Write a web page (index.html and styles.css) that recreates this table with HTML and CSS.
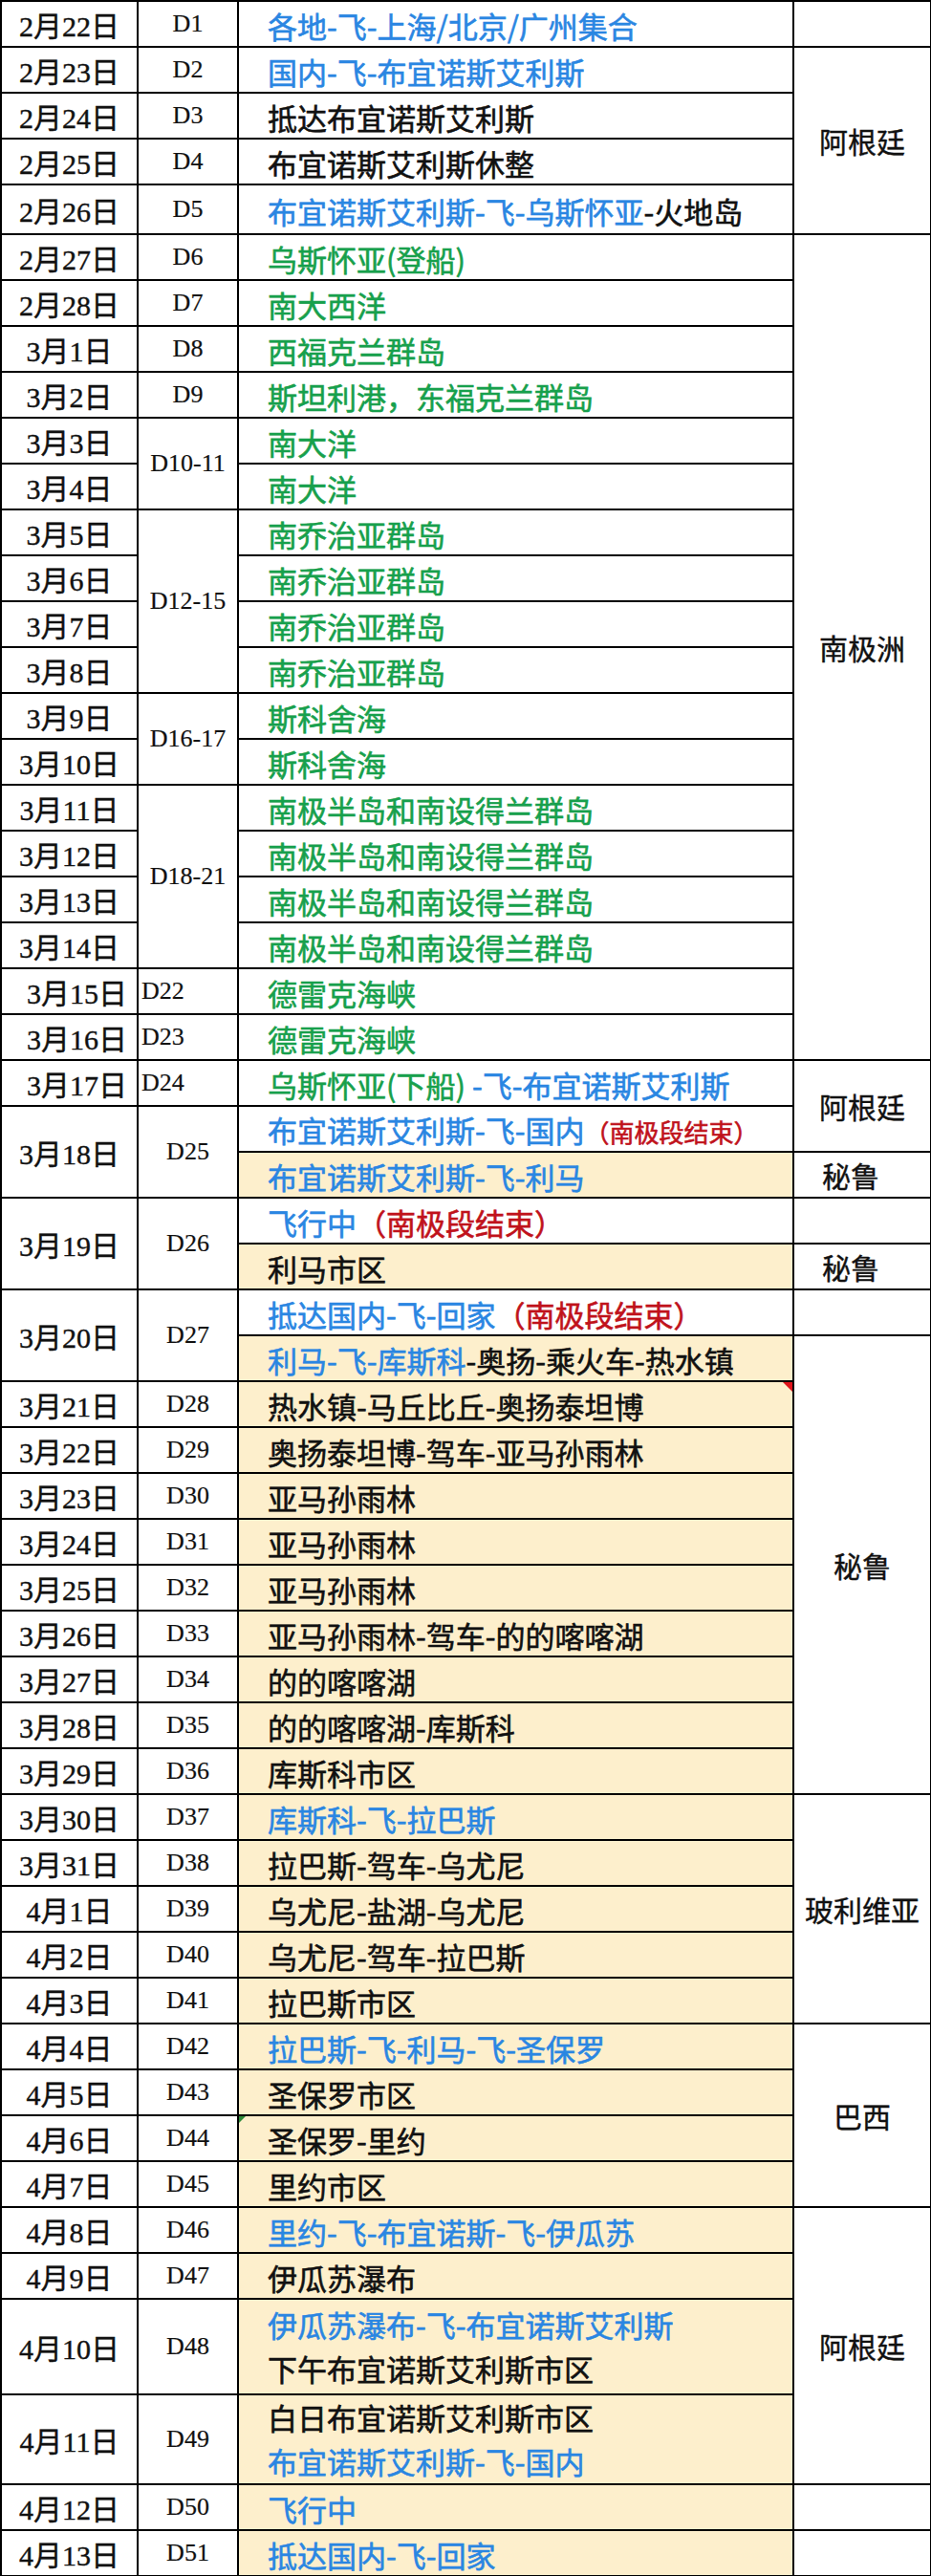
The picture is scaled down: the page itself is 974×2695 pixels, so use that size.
FILE: index.html
```html
<!DOCTYPE html>
<html lang="zh-CN">
<head>
<meta charset="utf-8">
<title>行程表</title>
<link rel="stylesheet" href="styles.css">
</head>
<body>
<table class="sched">
<colgroup>
<col class="c-date"><col class="c-day"><col class="c-act"><col class="c-country">
</colgroup>
<tbody>
<tr><td class="date">2月22日</td><td class="day">D1</td><td class="act"><span class="b">各地-飞-上海/北京/广州集合</span></td><td class="country"></td></tr>
<tr><td class="date">2月23日</td><td class="day">D2</td><td class="act"><span class="b">国内-飞-布宜诺斯艾利斯</span></td><td class="country" rowspan="4">阿根廷</td></tr>
<tr><td class="date">2月24日</td><td class="day">D3</td><td class="act">抵达布宜诺斯艾利斯</td></tr>
<tr><td class="date">2月25日</td><td class="day">D4</td><td class="act">布宜诺斯艾利斯休整</td></tr>
<tr class="tall52"><td class="date">2月26日</td><td class="day">D5</td><td class="act"><span class="b">布宜诺斯艾利斯-飞-乌斯怀亚</span>-火地岛</td></tr>
<tr><td class="date">2月27日</td><td class="day">D6</td><td class="act"><span class="g">乌斯怀亚(登船)</span></td><td class="country" rowspan="18">南极洲</td></tr>
<tr><td class="date">2月28日</td><td class="day">D7</td><td class="act"><span class="g">南大西洋</span></td></tr>
<tr><td class="date">3月1日</td><td class="day">D8</td><td class="act"><span class="g">西福克兰群岛</span></td></tr>
<tr><td class="date">3月2日</td><td class="day">D9</td><td class="act"><span class="g">斯坦利港，东福克兰群岛</span></td></tr>
<tr><td class="date">3月3日</td><td class="day" rowspan="2">D10-11</td><td class="act"><span class="g">南大洋</span></td></tr>
<tr><td class="date">3月4日</td><td class="act"><span class="g">南大洋</span></td></tr>
<tr><td class="date">3月5日</td><td class="day" rowspan="4">D12-15</td><td class="act"><span class="g">南乔治亚群岛</span></td></tr>
<tr><td class="date">3月6日</td><td class="act"><span class="g">南乔治亚群岛</span></td></tr>
<tr><td class="date">3月7日</td><td class="act"><span class="g">南乔治亚群岛</span></td></tr>
<tr><td class="date">3月8日</td><td class="act"><span class="g">南乔治亚群岛</span></td></tr>
<tr><td class="date">3月9日</td><td class="day" rowspan="2">D16-17</td><td class="act"><span class="g">斯科舍海</span></td></tr>
<tr><td class="date">3月10日</td><td class="act"><span class="g">斯科舍海</span></td></tr>
<tr><td class="date">3月11日</td><td class="day" rowspan="4">D18-21</td><td class="act"><span class="g">南极半岛和南设得兰群岛</span></td></tr>
<tr><td class="date">3月12日</td><td class="act"><span class="g">南极半岛和南设得兰群岛</span></td></tr>
<tr><td class="date">3月13日</td><td class="act"><span class="g">南极半岛和南设得兰群岛</span></td></tr>
<tr><td class="date">3月14日</td><td class="act"><span class="g">南极半岛和南设得兰群岛</span></td></tr>
<tr><td class="date shift">3月15日</td><td class="day left">D22</td><td class="act"><span class="g">德雷克海峡</span></td></tr>
<tr><td class="date shift">3月16日</td><td class="day left">D23</td><td class="act"><span class="g">德雷克海峡</span></td></tr>
<tr><td class="date shift">3月17日</td><td class="day left">D24</td><td class="act"><span class="g">乌斯怀亚(下船)</span><span class="b"> -飞-布宜诺斯艾利斯</span></td><td class="country" rowspan="2">阿根廷</td></tr>
<tr><td class="date" rowspan="2">3月18日</td><td class="day" rowspan="2">D25</td><td class="act"><span class="b">布宜诺斯艾利斯-飞-国内</span><span class="r small">（南极段结束）</span></td></tr>
<tr><td class="act tan"><span class="b">布宜诺斯艾利斯-飞-利马</span></td><td class="country peru">秘鲁</td></tr>
<tr><td class="date" rowspan="2">3月19日</td><td class="day" rowspan="2">D26</td><td class="act"><span class="b">飞行中</span><span class="r">（南极段结束）</span></td><td class="country"></td></tr>
<tr><td class="act tan">利马市区</td><td class="country peru">秘鲁</td></tr>
<tr><td class="date" rowspan="2">3月20日</td><td class="day" rowspan="2">D27</td><td class="act"><span class="b">抵达国内-飞-回家</span><span class="r">（南极段结束）</span></td><td class="country"></td></tr>
<tr><td class="act tan"><span class="b">利马-飞-库斯科</span>-奥扬-乘火车-热水镇</td><td class="country" rowspan="10">秘鲁</td></tr>
<tr><td class="date">3月21日</td><td class="day">D28</td><td class="act tan note">热水镇-马丘比丘-奥扬泰坦博</td></tr>
<tr><td class="date">3月22日</td><td class="day">D29</td><td class="act tan">奥扬泰坦博-驾车-亚马孙雨林</td></tr>
<tr><td class="date">3月23日</td><td class="day">D30</td><td class="act tan">亚马孙雨林</td></tr>
<tr><td class="date">3月24日</td><td class="day">D31</td><td class="act tan">亚马孙雨林</td></tr>
<tr><td class="date">3月25日</td><td class="day">D32</td><td class="act tan">亚马孙雨林</td></tr>
<tr><td class="date">3月26日</td><td class="day">D33</td><td class="act tan">亚马孙雨林-驾车-的的喀喀湖</td></tr>
<tr><td class="date">3月27日</td><td class="day">D34</td><td class="act tan">的的喀喀湖</td></tr>
<tr><td class="date">3月28日</td><td class="day">D35</td><td class="act tan">的的喀喀湖-库斯科</td></tr>
<tr><td class="date">3月29日</td><td class="day">D36</td><td class="act tan">库斯科市区</td></tr>
<tr><td class="date">3月30日</td><td class="day">D37</td><td class="act tan"><span class="b">库斯科-飞-拉巴斯</span></td><td class="country" rowspan="5">玻利维亚</td></tr>
<tr><td class="date">3月31日</td><td class="day">D38</td><td class="act tan">拉巴斯-驾车-乌尤尼</td></tr>
<tr><td class="date">4月1日</td><td class="day">D39</td><td class="act tan">乌尤尼-盐湖-乌尤尼</td></tr>
<tr><td class="date">4月2日</td><td class="day">D40</td><td class="act tan">乌尤尼-驾车-拉巴斯</td></tr>
<tr><td class="date">4月3日</td><td class="day">D41</td><td class="act tan">拉巴斯市区</td></tr>
<tr><td class="date">4月4日</td><td class="day">D42</td><td class="act tan"><span class="b">拉巴斯-飞-利马-飞-圣保罗</span></td><td class="country" rowspan="4">巴西</td></tr>
<tr><td class="date">4月5日</td><td class="day">D43</td><td class="act tan">圣保罗市区</td></tr>
<tr><td class="date">4月6日</td><td class="day">D44</td><td class="act tan flag">圣保罗-里约</td></tr>
<tr><td class="date">4月7日</td><td class="day">D45</td><td class="act tan">里约市区</td></tr>
<tr><td class="date">4月8日</td><td class="day">D46</td><td class="act tan"><span class="b">里约-飞-布宜诺斯-飞-伊瓜苏</span></td><td class="country" rowspan="4">阿根廷</td></tr>
<tr><td class="date">4月9日</td><td class="day">D47</td><td class="act tan">伊瓜苏瀑布</td></tr>
<tr class="tall100"><td class="date">4月10日</td><td class="day">D48</td><td class="act tan multi"><div class="b">伊瓜苏瀑布-飞-布宜诺斯艾利斯</div><div>下午布宜诺斯艾利斯市区</div></td></tr>
<tr class="tall92"><td class="date">4月11日</td><td class="day">D49</td><td class="act tan multi"><div>白日布宜诺斯艾利斯市区</div><div class="b">布宜诺斯艾利斯-飞-国内</div></td></tr>
<tr><td class="date">4月12日</td><td class="day">D50</td><td class="act tan"><span class="b">飞行中</span></td><td class="country"></td></tr>
<tr><td class="date">4月13日</td><td class="day">D51</td><td class="act tan"><span class="b">抵达国内-飞-回家</span></td><td class="country"></td></tr>
</tbody>
</table>
</body>
</html>
```

FILE: styles.css
```css
html, body {
  margin: 0;
  padding: 0;
  background: #ffffff;
}

.sched {
  border-collapse: collapse;
  table-layout: fixed;
  width: 973px;
  color: #111;
}

.c-date { width: 143px; }
.c-day { width: 105px; }
.c-act { width: 581px; }
.c-country { width: 144px; }

.sched tr { height: 48px; }
.sched tr.tall52 { height: 52px; }
.sched tr.tall100 { height: 100px; }
.sched tr.tall92 { height: 92px; }

.sched td {
  border: 2px solid #000;
  padding: 0;
  vertical-align: middle;
  white-space: nowrap;
}

.date {
  font-family: "Liberation Serif", "Noto Sans CJK SC", serif;
  font-size: 30px;
  text-align: center;
  padding-top: 3px;
  -webkit-text-stroke: 0.4px #111;
}

.date.shift {
  text-align: right;
  padding-right: 10px;
}

.day {
  font-family: "Liberation Serif", serif;
  font-size: 26px;
  text-align: center;
  padding-top: 3px;
  -webkit-text-stroke: 0.2px #111;
}

.day.left {
  text-align: left;
  padding-left: 3px;
}

.act {
  font-family: "Noto Sans CJK SC", sans-serif;
  font-size: 31px;
  padding-left: 30px !important;
  padding-top: 4px !important;
  line-height: 40px;
  position: relative;
  color: #111;
  -webkit-text-stroke: 0.6px currentColor;
}

.act span, .act div { -webkit-text-stroke: 0.6px currentColor; }

.act.tan { background: #fdefcc; }

.act.multi { padding-top: 0 !important; }
.act.multi div { line-height: 46px; }

.country {
  font-family: "Noto Sans CJK SC", sans-serif;
  font-size: 30px;
  text-align: center;
  color: #111;
  -webkit-text-stroke: 0.4px #111;
}

.country.peru { padding-right: 24px; }

.b { color: #2a86e2; }
.g { color: #17a04c; }
.r { color: #c0121b; }
.r.small { font-size: 26px; }

.note::after {
  content: "";
  position: absolute;
  top: 0;
  right: 0;
  width: 0;
  height: 0;
  border-top: 10px solid #e0141b;
  border-left: 10px solid transparent;
}

.flag::before {
  content: "";
  position: absolute;
  top: 0;
  left: 0;
  width: 0;
  height: 0;
  border-top: 7px solid #2e8b3a;
  border-right: 7px solid transparent;
}
```
